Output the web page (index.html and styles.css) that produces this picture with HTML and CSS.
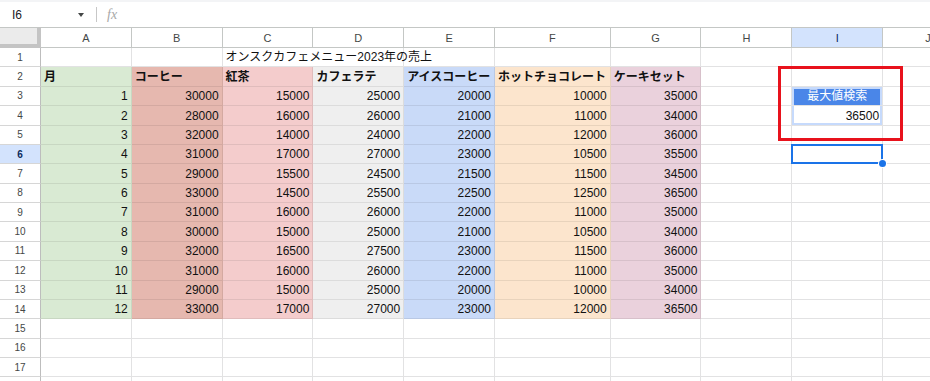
FILE: index.html
```html
<!DOCTYPE html>
<html lang="ja">
<head>
<meta charset="utf-8">
<title>オンスクカフェメニュー2023年の売上</title>
<link rel="stylesheet" href="styles.css">
</head>
<body>
<div class="app">
  <div class="fbar">
    <div class="namebox"><span class="ref">I6</span><span class="caret"></span></div>
    <span class="sep"></span>
    <span class="fx">fx</span>
  </div>
  <div class="sheet">
    <div class="corner"></div>
    <div class="ch">A</div><div class="ch">B</div><div class="ch">C</div><div class="ch">D</div><div class="ch">E</div><div class="ch">F</div><div class="ch">G</div><div class="ch">H</div><div class="ch on">I</div><div class="ch">J</div>

    <div class="rh">1</div><div class="c"></div><div class="c"></div><div class="c title">オンスクカフェメニュー2023年の売上</div><div class="c"></div><div class="c"></div><div class="c"></div><div class="c"></div><div class="c"></div><div class="c"></div>

    <div class="rh">2</div><div class="c h g">月</div><div class="c h r">コーヒー</div><div class="c h p">紅茶</div><div class="c h gy">カフェラテ</div><div class="c h b">アイスコーヒー</div><div class="c h o">ホットチョコレート</div><div class="c h m">ケーキセット</div><div class="c"></div><div class="c"></div><div class="c"></div>

    <div class="rh">3</div><div class="c n g">1</div><div class="c n r">30000</div><div class="c n p">15000</div><div class="c n gy">25000</div><div class="c n b">20000</div><div class="c n o">10000</div><div class="c n m">35000</div><div class="c"></div><div class="c mx-head">最大値検索</div><div class="c"></div>

    <div class="rh">4</div><div class="c n g">2</div><div class="c n r">28000</div><div class="c n p">16000</div><div class="c n gy">26000</div><div class="c n b">21000</div><div class="c n o">11000</div><div class="c n m">34000</div><div class="c"></div><div class="c n mx-val">36500</div><div class="c"></div>

    <div class="rh">5</div><div class="c n g">3</div><div class="c n r">32000</div><div class="c n p">14000</div><div class="c n gy">24000</div><div class="c n b">22000</div><div class="c n o">12000</div><div class="c n m">36000</div><div class="c"></div><div class="c"></div><div class="c"></div>

    <div class="rh on">6</div><div class="c n g">4</div><div class="c n r">31000</div><div class="c n p">17000</div><div class="c n gy">27000</div><div class="c n b">23000</div><div class="c n o">10500</div><div class="c n m">35500</div><div class="c"></div><div class="c sel"></div><div class="c"></div>

    <div class="rh">7</div><div class="c n g">5</div><div class="c n r">29000</div><div class="c n p">15500</div><div class="c n gy">24500</div><div class="c n b">21500</div><div class="c n o">11500</div><div class="c n m">34500</div><div class="c"></div><div class="c"></div><div class="c"></div>

    <div class="rh">8</div><div class="c n g">6</div><div class="c n r">33000</div><div class="c n p">14500</div><div class="c n gy">25500</div><div class="c n b">22500</div><div class="c n o">12500</div><div class="c n m">36500</div><div class="c"></div><div class="c"></div><div class="c"></div>

    <div class="rh">9</div><div class="c n g">7</div><div class="c n r">31000</div><div class="c n p">16000</div><div class="c n gy">26000</div><div class="c n b">22000</div><div class="c n o">11000</div><div class="c n m">35000</div><div class="c"></div><div class="c"></div><div class="c"></div>

    <div class="rh">10</div><div class="c n g">8</div><div class="c n r">30000</div><div class="c n p">15000</div><div class="c n gy">25000</div><div class="c n b">21000</div><div class="c n o">10500</div><div class="c n m">34000</div><div class="c"></div><div class="c"></div><div class="c"></div>

    <div class="rh">11</div><div class="c n g">9</div><div class="c n r">32000</div><div class="c n p">16500</div><div class="c n gy">27500</div><div class="c n b">23000</div><div class="c n o">11500</div><div class="c n m">36000</div><div class="c"></div><div class="c"></div><div class="c"></div>

    <div class="rh">12</div><div class="c n g">10</div><div class="c n r">31000</div><div class="c n p">16000</div><div class="c n gy">26000</div><div class="c n b">22000</div><div class="c n o">11000</div><div class="c n m">35000</div><div class="c"></div><div class="c"></div><div class="c"></div>

    <div class="rh">13</div><div class="c n g">11</div><div class="c n r">29000</div><div class="c n p">15000</div><div class="c n gy">25000</div><div class="c n b">20000</div><div class="c n o">10000</div><div class="c n m">34000</div><div class="c"></div><div class="c"></div><div class="c"></div>

    <div class="rh">14</div><div class="c n g">12</div><div class="c n r">33000</div><div class="c n p">17000</div><div class="c n gy">27000</div><div class="c n b">23000</div><div class="c n o">12000</div><div class="c n m">36500</div><div class="c"></div><div class="c"></div><div class="c"></div>

    <div class="rh">15</div><div class="c"></div><div class="c"></div><div class="c"></div><div class="c"></div><div class="c"></div><div class="c"></div><div class="c"></div><div class="c"></div><div class="c"></div><div class="c"></div>

    <div class="rh">16</div><div class="c"></div><div class="c"></div><div class="c"></div><div class="c"></div><div class="c"></div><div class="c"></div><div class="c"></div><div class="c"></div><div class="c"></div><div class="c"></div>

    <div class="rh">17</div><div class="c"></div><div class="c"></div><div class="c"></div><div class="c"></div><div class="c"></div><div class="c"></div><div class="c"></div><div class="c"></div><div class="c"></div><div class="c"></div>

    <div class="rh"></div><div class="c"></div><div class="c"></div><div class="c"></div><div class="c"></div><div class="c"></div><div class="c"></div><div class="c"></div><div class="c"></div><div class="c"></div><div class="c"></div>
  </div>
  <div class="callout"></div>
</div>
</body>
</html>
```

FILE: styles.css
```css
* { box-sizing: border-box; }

html, body {
  margin: 0;
  padding: 0;
  background: #ffffff;
}

body {
  font-family: "Liberation Sans", Arial, "Noto Sans CJK JP", sans-serif;
  color: #222222;
  width: 930px;
  height: 381px;
  overflow: hidden;
}

.app {
  position: relative;
  width: 930px;
  height: 381px;
  overflow: hidden;
}

/* formula bar */
.fbar {
  height: 27px;
  display: flex;
  align-items: center;
  border-top: 2px solid #f3f4f6;
  background: #ffffff;
}

.namebox {
  width: 91px;
  display: flex;
  align-items: center;
  justify-content: space-between;
  padding: 0 7px 0 12px;
}

.ref {
  font-size: 12px;
  color: #202124;
}

.caret {
  width: 0;
  height: 0;
  border-left: 3.5px solid transparent;
  border-right: 3.5px solid transparent;
  border-top: 4px solid #444746;
}

.sep {
  width: 1px;
  height: 15px;
  background: #c7c7c7;
  margin-left: 5px;
}

.fx {
  margin-left: 10px;
  font-family: "Liberation Serif", serif;
  font-style: italic;
  font-size: 14px;
  color: #a8a8a8;
}

/* grid */
.sheet {
  display: grid;
  grid-template-columns: 41px repeat(5, 90.8px) 115.7px repeat(4, 90.8px);
  grid-template-rows: 21px;
  grid-auto-rows: 19.38px;
  font-size: 12px;
}

.corner {
  background: #ebebeb;
  border-right: 4px solid #c4c4c4;
  border-bottom: 4px solid #c4c4c4;
  border-top: 1px solid #c4c7c5;
}

.ch {
  display: flex;
  align-items: center;
  justify-content: center;
  font-size: 11px;
  color: #444746;
  background: #ffffff;
  border-top: 1px solid #c4c7c5;
  border-right: 1px solid #c4c7c5;
  border-bottom: 1px solid #c4c7c5;
}

.ch.on {
  background: #d3e3fd;
  color: #0b2a5c;
}

.rh {
  display: flex;
  align-items: center;
  justify-content: center;
  font-size: 10px;
  color: #444746;
  background: #ffffff;
  border-right: 1px solid #bdbdbd;
  border-bottom: 1px solid #d6d6d6;
}

.rh.on {
  background: #d3e3fd;
  font-weight: bold;
  color: #0b2a5c;
}

.c {
  position: relative;
  display: flex;
  align-items: flex-end;
  padding: 0 3px 2px 3px;
  line-height: 14px;
  white-space: nowrap;
  color: #111111;
  border-right: 1px solid #e2e2e3;
  border-bottom: 1px solid #e2e2e3;
}

.title {
  grid-column: span 2;
}

.n { justify-content: flex-end; }

.h { font-weight: bold; }

.g, .r, .p, .gy, .b, .o, .m {
  border-color: rgba(0, 0, 0, 0.08);
}

.g  { background: #d9ead3; }
.r  { background: #e6b8af; }
.p  { background: #f4cccc; }
.gy { background: #efefef; }
.b  { background: #c9daf8; }
.o  { background: #fce5cd; }
.m  { background: #ead1dc; }

.mx-head {
  justify-content: center;
  background: #4a86e8;
  color: #ffffff;
  box-shadow: inset 2px 2px 0 #c6dafc, inset -2px 0 0 #c6dafc;
}

.mx-val {
  box-shadow: inset 2px -2px 0 #c6dafc, inset -2px 0 0 #c6dafc;
}

.sel::after {
  content: "";
  position: absolute;
  left: -1px;
  top: -1px;
  right: -1px;
  bottom: -1px;
  border: 2px solid #1a73e8;
}

.sel::before {
  content: "";
  position: absolute;
  right: -4px;
  bottom: -4px;
  width: 7px;
  height: 7px;
  border-radius: 50%;
  background: #1a73e8;
  box-shadow: 0 0 0 1px #ffffff;
  z-index: 2;
}

/* annotation box */
.callout {
  position: absolute;
  left: 778px;
  top: 66px;
  width: 125px;
  height: 75px;
  border: 3px solid #e8121c;
}
```
